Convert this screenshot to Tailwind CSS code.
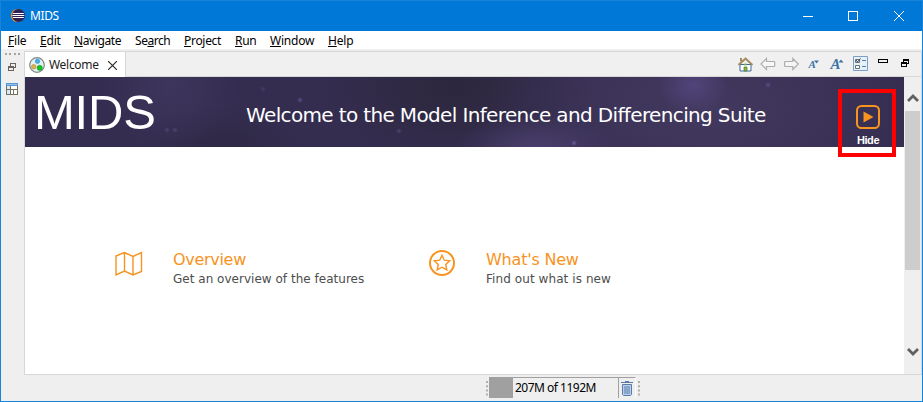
<!DOCTYPE html>
<html lang="en">
<head>
<meta charset="utf-8">
<title>MIDS</title>
<script src="https://cdn.jsdelivr.net/npm/@tailwindcss/browser@4"></script>
</head>
<body class="overflow-hidden">
<div class="w-[923px] h-[402px] flex flex-col border border-[#1883d7] bg-[#efefef] font-['Noto_Sans',sans-serif] text-[12px] text-black whitespace-nowrap">
  <!-- title bar -->
  <header class="h-[30px] shrink-0 bg-[#0078d7] flex items-center text-white">
    <svg class="ml-[9px] w-[16px] h-[16px]" viewBox="0 0 16 16"><circle cx="7.500" cy="7.500" r="6.600" fill="#f7941e"/><circle cx="8.500" cy="7.500" r="6.500" fill="#2c2255"/><path d="M2.800 5.500h11M2.300 7.500h12M2.800 9.500h11" stroke="#fff" stroke-width="1"/></svg>
    <span class="ml-[4px] w-[60px] leading-[16px] tracking-[-0.4px]">MIDS</span>
    <svg class="ml-auto mr-[17px] w-[103px] h-[12px]" viewBox="0 0 103 12" fill="none" stroke="#fff" shape-rendering="crispEdges"><path d="M1 6.500h10M46.500 1.500h9v9h-9z"/><path d="M92 1l10 10M102 1l-10 10" shape-rendering="auto"/></svg>
  </header>
  <!-- menu bar -->
  <nav class="h-[18px] shrink-0 bg-white pl-[7px] flex leading-[20px]">
    <span class="w-[32px] tracking-[-0.2px]"><u>F</u>ile</span><span class="w-[34px] tracking-[-0.2px]"><u>E</u>dit</span><span class="w-[61px] tracking-[-0.4px]"><u>N</u>avigate</span><span class="w-[49px] tracking-[-0.45px]">Se<u>a</u>rch</span><span class="w-[51px] tracking-[-0.3px]"><u>P</u>roject</span><span class="w-[35px] tracking-[-0.3px]"><u>R</u>un</span><span class="w-[58px] tracking-[-0.2px]"><u>W</u>indow</span><span class="tracking-[-0.2px]"><u>H</u>elp</span>
  </nav>
  <div class="h-[326px] shrink-0 flex">
    <!-- trim stack -->
    <aside class="w-[23px] shrink-0">
      <svg class="w-[23px] h-[50px]" viewBox="0 0 23 50" fill="none" shape-rendering="crispEdges"><path d="M4 4.500h15" stroke="#aaa59a" stroke-width="2" stroke-dasharray="2 2.300"/><path d="M9.500 18V14.500h5v4H13M9 14.500h6M7.500 17.500h5v4h-5zM7 18.500h6" stroke="#69635b"/><path d="M5.500 34.500h11v11h-11z" fill="#fff" stroke="#76705f"/><path d="M6 37h3v8H6z" fill="#d5eaf8"/><path d="M5 34h12v3H5z" fill="#5b96cf"/><path d="M6 35.500h10" stroke="#8fc5ee"/><path d="M9.500 37v8M6 40.500h10M12.500 41v4" stroke="#76705f"/></svg>
    </aside>
    <section class="flex-1 mt-[2px] border border-[#d7d7d7] bg-white flex flex-col">
      <div class="h-[25px] shrink-0 bg-[#f0f0f0] border-b border-[#d7d7d7] flex">
        <div class="w-[101px] h-[25px] bg-white border-r border-[#d7d7d7] flex items-center">
          <svg class="ml-[4px] w-[16px] h-[16px]" viewBox="0 0 16 16"><circle cx="8" cy="8" r="7.300" fill="#e4f0f2" stroke="#7b8587" stroke-width="1.200"/><circle cx="8.500" cy="4.300" r="2.200" fill="#3fb3ea" stroke="#2581bd" stroke-width=".5"/><circle cx="4.700" cy="9.800" r="2.300" fill="#dcae4d" stroke="#a67c22" stroke-width=".5"/><circle cx="10.700" cy="10.800" r="2.600" fill="#12c51c" stroke="#078511" stroke-width=".5"/></svg>
          <span class="ml-[4px] w-[59px] leading-[16px] tracking-[-0.3px] text-[#1c1c1c]">Welcome</span>
          <svg class="mt-[2px] w-[9px] h-[9px]" viewBox="0 0 9 9" stroke="#222" stroke-width="1.100"><path d="M0 0l9 9M9 0L0 9"/></svg>
        </div>
        <svg class="ml-auto w-[186px] h-[24px]" viewBox="735 52 186 24" fill="none">
          <!-- home -->
          <path d="M740 64.500h11v6.500h-11z" fill="#fff" stroke="#3c6b94"/><path d="M738.500 65l7-6.500 7 6.500" stroke="#a58b61" stroke-width="2"/><path d="M741 58v3.500" stroke="#a58b61" stroke-width="2"/><path d="M744 67h3v4h-3z" fill="#8ab632" stroke="#4f7440" stroke-width=".7"/><path d="M744.500 63.500h2v2h-2z" fill="#8ab632"/>
          <!-- history arrows -->
          <path d="M761 64l5.500-5.500V61.500h7.500a.7.700 0 0 1 .7.700v3.600a.7.700 0 0 1-.7.700h-7.500v3z" stroke="#adadad" stroke-width="1.200" fill="#f6f6f6"/><path d="M798.300 64l-5.500-5.500V61.500h-7.500a.7.700 0 0 0-.7.700v3.600a.7.700 0 0 0 .7.700h7.500v3z" stroke="#adadad" stroke-width="1.200" fill="#f6f6f6"/>
          <!-- text size -->
          <g fill="#3d74a5" font-family="Liberation Serif, serif" font-weight="bold" font-style="italic"><text x="808.500" y="68" font-size="11">A</text><text x="830.500" y="69" font-size="15">A</text><path d="M814 60.500h5l-2.500 3zM838.500 62.500h5l-2.500-3z"/></g>
          <!-- customize -->
          <path d="M853.500 56.500h14v14h-14z" fill="#e6f0f9" stroke="#7b9fc5"/><path d="M855.500 59.500h4v3h-4zM855.500 65.500h4v3h-4z" fill="#fff" stroke="#66717e"/><path d="M856 60l1.500 2 3-3.500" stroke="#303c49"/><path d="M862 60.500h4M862 66.500h4" stroke="#4f81b5"/>
          <!-- minimize, restore -->
          <g stroke="#000" shape-rendering="crispEdges"><path d="M878.500 59.500h9v3h-9zM903.500 59.500h5v4h-5zM903 60.500h6"/><path d="M901.500 62.500h5v4h-5zM901 63.500h6" fill="#f0f0f0"/></g>
        </svg>
      </div>
      <div class="flex flex-1 min-h-0">
        <main class="w-[879px] flex flex-col">
          <div class="h-[70px] shrink-0 flex bg-[#352d50] bg-[radial-gradient(circle_3px_at_238px_12px,#463c68,transparent),radial-gradient(circle_3px_at_275px_23px,#5b4f88,transparent),radial-gradient(circle_3px_at_549px_66px,#6a5b9a,transparent),radial-gradient(circle_3px_at_743px_8px,#5b4f88,transparent),radial-gradient(circle_3px_at_142px_53px,#4e4473,transparent),radial-gradient(circle_3px_at_150px_53px,#4e4473,transparent),radial-gradient(circle_3px_at_374px_54px,#4e4473,transparent),radial-gradient(ellipse_35px_28px_at_668px_8px,#51447b,transparent),radial-gradient(ellipse_80px_35px_at_510px_72px,#4a3f6d,transparent),radial-gradient(ellipse_70px_60px_at_145px_10px,#3e355c,transparent),radial-gradient(ellipse_220px_120px_at_680px_30px,#43395f,transparent),radial-gradient(ellipse_140px_80px_at_430px_10px,#2c273d,transparent),radial-gradient(ellipse_80px_40px_at_200px_70px,#2e2945,transparent)]">
            <h1 class="ml-[9px] w-[212px] font-['Liberation_Sans',sans-serif] text-[49px] leading-[71px] tracking-[-0.2px] text-white">MIDS</h1>
            <h2 class="w-[592px] font-['DejaVu_Sans',sans-serif] text-[20px] leading-[76px] tracking-[-0.64px] text-white">Welcome to the Model Inference and Differencing Suite</h2>
            <!-- highlighted hide button -->
            <div class="relative z-10 mt-[12px] w-[58px] h-[68px] border-4 border-[#f00] flex flex-col items-center">
              <svg class="mt-[12px] ml-[2px] w-[24px] h-[24px] shrink-0" viewBox="0 0 24 24"><rect x="1" y="1" width="22" height="22" rx="4.500" fill="none" stroke="#f7931e" stroke-width="2"/><path d="M7.500 6.500l10 5.500-10 5.500z" fill="#f7931e"/></svg>
              <span class="mt-[4px] ml-[2px] font-['Liberation_Sans',sans-serif] font-bold text-[11px] leading-[14px] tracking-[-0.4px] text-white">Hide</span>
            </div>
          </div>
          <div class="pt-[103px] pl-[90px] flex font-['DejaVu_Sans',sans-serif]">
            <div class="w-[314px] flex">
              <svg class="w-[28px] h-[26px] mt-[1px] mr-[30px]" viewBox="0 0 28 26" fill="none" stroke="#f7931e" stroke-width="1.400"><path d="M1 5l8.500-3.500 8.500 4 8.500-4v19L18 24l-8.500-4L1 24zM9.500 1.500V20M18 5.500V24"/></svg>
              <div><h3 class="text-[16px] leading-[20px] tracking-[-0.3px] text-[#f7931e]">Overview</h3><p class="text-[12px] leading-[18px] tracking-[0.02px] text-[#4d4d4d]">Get an overview of the features</p></div>
            </div>
            <div class="flex">
              <svg class="w-[26px] h-[26px] mr-[31px]" viewBox="0 0 26 26" fill="none" stroke="#f7931e"><circle cx="13" cy="13" r="12" stroke-width="2"/><path d="M13 5.200l2.300 5 5.400.6-4 3.700 1.100 5.400-4.800-2.700-4.800 2.700 1.100-5.400-4-3.700 5.400-.6z" stroke-width="1.400"/></svg>
              <div><h3 class="text-[16px] leading-[20px] tracking-[-0.2px] text-[#f7931e]">What's New</h3><p class="text-[12px] leading-[18px] tracking-[0.08px] text-[#4d4d4d]">Find out what is new</p></div>
            </div>
          </div>
        </main>
        <div class="w-[17px] bg-[#efefef] flex flex-col items-center">
          <svg class="mt-[16px] w-[12px] h-[10px]" viewBox="0 0 12 10"><path d="M1 8l5-5 5 5" fill="none" stroke="#606060" stroke-width="2.800"/></svg>
          <div class="mt-[8px] w-[15px] h-[159px] bg-[#cdcdcd]"></div>
          <svg class="mt-[77px] w-[12px] h-[10px]" viewBox="0 0 12 10"><path d="M1 2l5 5 5-5" fill="none" stroke="#606060" stroke-width="2.800"/></svg>
        </div>
      </div>
    </section>
  </div>
  <!-- status bar -->
  <footer class="h-[26px] pl-[484px] pt-[2px] flex">
    <svg class="w-[4px] h-[22px]" viewBox="0 0 4 22"><path d="M2 4v15" stroke="#b5b0a6" stroke-width="2" stroke-dasharray="2 2.200"/></svg>
    <div class="w-[147px] h-[21px] border-t border-l border-[#a0a0a0] border-r border-r-white flex">
      <div class="w-[23px] bg-[#a0a0a0]"></div>
      <span class="w-[106px] pl-[2px] leading-[20px] tracking-[-0.5px] border-r border-[#a0a0a0]">207M of 1192M</span>
      <svg class="ml-[2px] mt-[3px] w-[12px] h-[16px]" viewBox="0 0 12 16" fill="none" stroke="#587ba8"><path d="M0 1.500h12M4 .5h4"/><path d="M1.500 3.500h9v10l-1 1h-7l-1-1z" fill="#b9d0ed"/><path d="M4 5v8M6 5v8M8 5v8"/></svg>
    </div>
    <svg class="ml-[1px] w-[4px] h-[22px]" viewBox="0 0 4 22"><path d="M2 4v15" stroke="#b5b0a6" stroke-width="2" stroke-dasharray="2 2.200"/></svg>
  </footer>
</div>
</body>
</html>
